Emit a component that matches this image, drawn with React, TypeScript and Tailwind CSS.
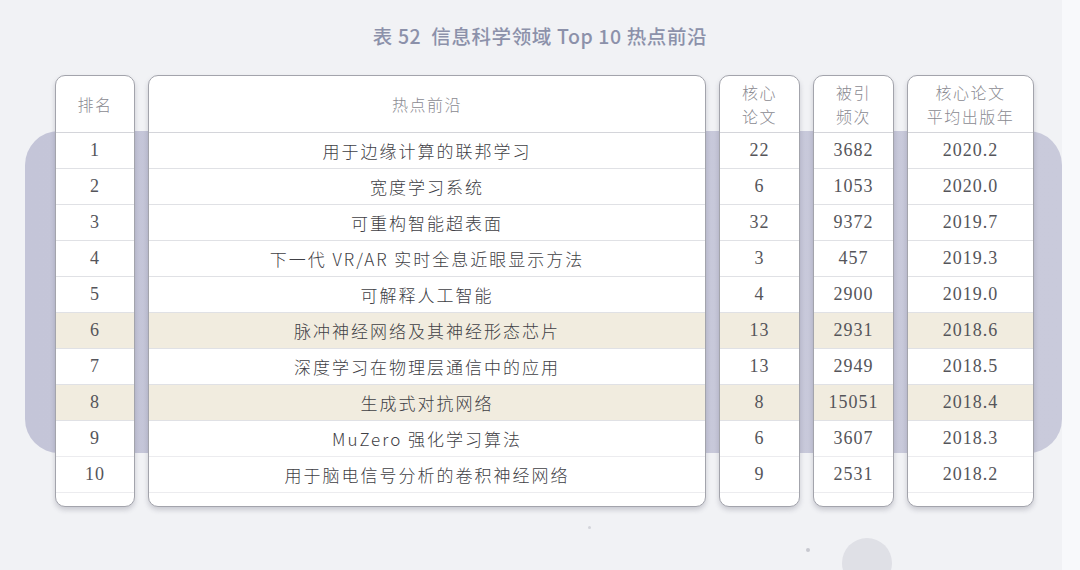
import React from 'react';

type Row = {
  rank: number;
  topic: string;
  papers: number;
  cites: number;
  year: string;
};

const rows: Row[] = [
  { rank: 1, topic: '用于边缘计算的联邦学习', papers: 22, cites: 3682, year: '2020.2' },
  { rank: 2, topic: '宽度学习系统', papers: 6, cites: 1053, year: '2020.0' },
  { rank: 3, topic: '可重构智能超表面', papers: 32, cites: 9372, year: '2019.7' },
  { rank: 4, topic: '下一代 VR/AR 实时全息近眼显示方法', papers: 3, cites: 457, year: '2019.3' },
  { rank: 5, topic: '可解释人工智能', papers: 4, cites: 2900, year: '2019.0' },
  { rank: 6, topic: '脉冲神经网络及其神经形态芯片', papers: 13, cites: 2931, year: '2018.6' },
  { rank: 7, topic: '深度学习在物理层通信中的应用', papers: 13, cites: 2949, year: '2018.5' },
  { rank: 8, topic: '生成式对抗网络', papers: 8, cites: 15051, year: '2018.4' },
  { rank: 9, topic: 'MuZero 强化学习算法', papers: 6, cites: 3607, year: '2018.3' },
  { rank: 10, topic: '用于脑电信号分析的卷积神经网络', papers: 9, cites: 2531, year: '2018.2' },
];

// rows 6 and 8 are tinted in the source table
const highlighted = new Set([6, 8]);

const cjk = '"Noto Sans CJK SC", "Noto Sans", sans-serif';
const digits = '"Liberation Serif", "Noto Sans CJK SC", serif';

function Column({
  width,
  header,
  cells,
  numeric = false,
}: {
  width: string;
  header: React.ReactNode;
  cells: React.ReactNode[];
  numeric?: boolean;
}) {
  return (
    <div
      className={`${width} flex flex-col overflow-hidden rounded-[10px] border-[1.5px] border-[#a3a4ac] bg-white pb-[13px] shadow-[0_3px_5px_rgba(60,60,80,0.22)]`}
    >
      {/* Header */}
      <div
        className="flex h-[57px] flex-col items-center justify-center border-b border-[#d4d5da] text-[16px] font-light leading-[24px] tracking-[1.5px] text-[#8a8a91]"
        style={{ fontFamily: cjk }}
      >
        {header}
      </div>

      {/* Body rows */}
      {cells.map((cell, i) => (
        <div
          key={i}
          className={`flex h-[36px] items-center justify-center border-b ${
            i >= 8 ? 'border-[#ececef]' : 'border-[#e0e1e5]'
          } ${highlighted.has(i + 1) ? 'bg-[#f1ecdf]' : 'bg-white'} ${
            numeric
              ? 'text-[18px] tracking-[1px] text-[#55555a]'
              : 'text-[17px] font-light tracking-[2px] text-[#404045]'
          }`}
          style={{ fontFamily: numeric ? digits : cjk }}
        >
          {cell}
        </div>
      ))}
    </div>
  );
}

export default function App() {
  return (
    <div className="relative h-[570px] w-[1080px] overflow-hidden bg-[#f1f2f5]">
      {/* Lavender band behind the table */}
      <div className="absolute left-[25px] top-[131px] h-[322px] w-[1037px] rounded-[34px] bg-gradient-to-r from-[#c4c5d8] to-[#c9cadb]" />
      {/* Pale strip on the right edge */}
      <div className="absolute right-0 top-0 h-full w-[18px] bg-[#f8f9fb]" />
      {/* Faint bottom decorations */}
      <div className="absolute left-[842px] top-[538px] h-[50px] w-[50px] rounded-full bg-[#dfe0e6]" />
      <div className="absolute left-[806px] top-[548px] h-[4px] w-[4px] rounded-full bg-[#c8c9d0]" />
      <div className="absolute left-[588px] top-[526px] h-[3px] w-[3px] rounded-full bg-[#d3d4da]" />

      <div className="relative flex flex-col">
        {/* Title */}
        <div
          className="flex h-[75px] items-start justify-center pt-[22px] text-[19.5px] font-medium leading-[28px] tracking-[0.6px] text-[#8c91aa]"
          style={{ fontFamily: cjk }}
        >
          表 52&nbsp;&nbsp;信息科学领域 Top 10 热点前沿
        </div>

        {/* Table columns */}
        <div className="flex gap-[13px] pl-[55px]">
          <Column width="w-[80px]" header="排名" cells={rows.map((r) => r.rank)} numeric />
          <Column width="w-[558px]" header="热点前沿" cells={rows.map((r) => r.topic)} />
          <Column
            width="w-[81px]"
            header={
              <>
                <span>核心</span>
                <span>论文</span>
              </>
            }
            cells={rows.map((r) => r.papers)}
            numeric
          />
          <Column
            width="w-[81px]"
            header={
              <>
                <span>被引</span>
                <span>频次</span>
              </>
            }
            cells={rows.map((r) => r.cites)}
            numeric
          />
          <Column
            width="w-[127px]"
            header={
              <>
                <span>核心论文</span>
                <span>平均出版年</span>
              </>
            }
            cells={rows.map((r) => r.year)}
            numeric
          />
        </div>
      </div>
    </div>
  );
}
